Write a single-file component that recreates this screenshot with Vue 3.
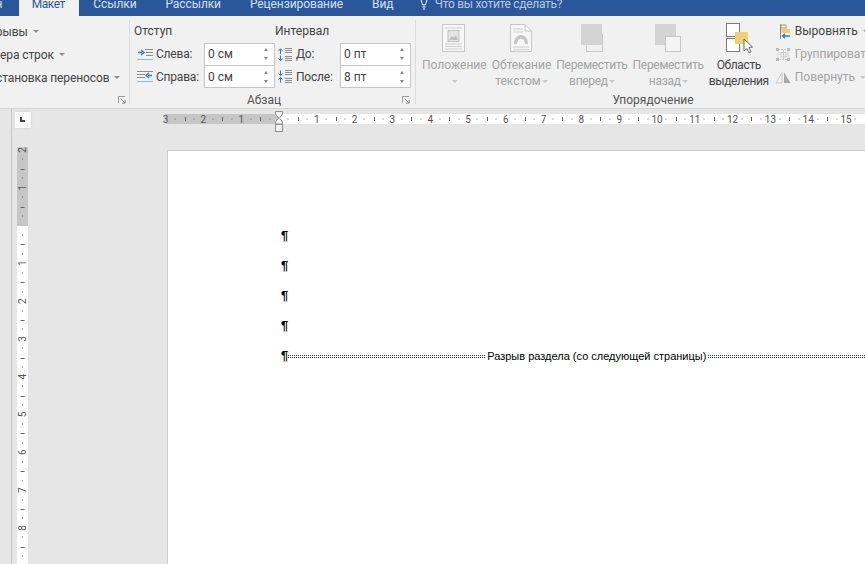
<template>
  <div class="app">
    <!-- вкладки -->
    <div class="tabs">
      <span v-for="t in tabs" :key="t" class="tab" :class="{ active: t === 'Макет' }">{{ t }}</span>
      <svg class="bulb" width="12" height="12" viewBox="0 0 12 12">
        <path d="M3 -1 C3 2 4.5 3 4.5 5 L7.5 5 C7.5 3 9 2 9 -1" fill="none" stroke="#fff" />
        <path d="M4.5 7 H7.5 M5 9 H7" stroke="#fff" />
      </svg>
      <span class="tell">Что вы хотите сделать?</span>
    </div>

    <!-- лента -->
    <div class="ribbon">
      <section class="group g-page">
        <div class="body small-col">
          <div v-for="r in pageRows" :key="r" class="small-row"><span>{{ r }}</span><i class="caret"></i></div>
        </div>
        <div class="foot">
          <span></span><span></span>
          <svg class="launcher" width="8" height="8" viewBox="0 0 9 9">
            <path d="M0.5 8 V0.5 H8" fill="none" stroke="#8a8a8a" />
            <path d="M3 3 L7.5 7.5 M8 4.5 V8 H4.5" fill="none" stroke="#777" />
          </svg>
        </div>
      </section>

      <section class="group g-para">
        <div class="body para">
          <div v-for="col in paraCols" :key="col.title" class="para-col" :class="col.cls">
            <div class="para-title">{{ col.title }}</div>
            <div v-for="row in col.rows" :key="row.label" class="para-row">
              <svg class="para-icon" width="16" height="13" viewBox="0 0 16 13">
                <template v-if="row.icon === 'left'">
                  <path d="M8 1.5 H16 M9 4.5 H16 M9 7.5 H16" stroke="#8d8d8d" />
                  <path d="M0 11.5 H16" stroke="#9ab6cc" />
                  <path d="M1 4.5 H5 M4 2 L7 4.5 L4 7" fill="none" stroke="#2e7cb5" stroke-width="1.4" />
                </template>
                <template v-else-if="row.icon === 'right'">
                  <path d="M0 1.5 H16 M0 4.5 H8 M0 7.5 H8" stroke="#8d8d8d" />
                  <path d="M0 11.5 H16" stroke="#9ab6cc" />
                  <path d="M15 5.5 H11 M12 3 L9 5.5 L12 8" fill="none" stroke="#2e7cb5" stroke-width="1.4" />
                </template>
                <template v-else-if="row.icon === 'before'">
                  <path d="M3.5 6 V1 M1.5 3 L3.5 .8 L5.5 3" fill="none" stroke="#2e7cb5" />
                  <path d="M3.5 7.5 V12.5 M1.5 10.5 L3.5 12.7 L5.5 10.5" fill="none" stroke="#2e7cb5" />
                  <path d="M8 .5 H15 M8 2.5 H15 M8 4.5 H15 M8 8.5 H15 M8 10.5 H15 M8 12.5 H15" stroke="#8d8d8d" />
                </template>
                <template v-else>
                  <path d="M3.5 .5 V5.5 M1.5 3.5 L3.5 5.7 L5.5 3.5" fill="none" stroke="#2e7cb5" />
                  <path d="M3.5 12.5 V7.5 M1.5 9.5 L3.5 7.3 L5.5 9.5" fill="none" stroke="#2e7cb5" />
                  <path d="M8 .5 H15 M8 2.5 H15 M8 4.5 H15 M8 8.5 H15 M8 10.5 H15 M8 12.5 H15" stroke="#8d8d8d" />
                </template>
              </svg>
              <span class="para-label">{{ row.label }}</span>
              <div class="spin">
                <span>{{ row.value }}</span>
                <div class="arrows"><i class="up"></i><i class="down"></i></div>
              </div>
            </div>
          </div>
        </div>
        <div class="foot">
          <span></span><span>Абзац</span>
          <svg class="launcher" width="8" height="8" viewBox="0 0 9 9">
            <path d="M0.5 8 V0.5 H8" fill="none" stroke="#8a8a8a" />
            <path d="M3 3 L7.5 7.5 M8 4.5 V8 H4.5" fill="none" stroke="#777" />
          </svg>
        </div>
      </section>

      <section class="group g-arrange">
        <div class="body arrange">
          <div class="big off">
            <svg width="40" height="32" viewBox="0 0 40 32">
              <rect x="8.5" y="2.5" width="22" height="27" fill="#f7f7f7" stroke="#c6c6c6" />
              <path d="M11 6 H28 M11 22 H28 M11 24.5 H28 M11 27 H28" stroke="#cfcfcf" />
              <rect x="14" y="8.5" width="11" height="11" fill="#e4e4e4" stroke="#c2c2c2" />
              <path d="M15 18 L18 14 L20 16 L22 13 L24 18 Z" fill="#bdbdbd" />
            </svg>
            <div class="big-text">Положение<br /><i class="caret"></i></div>
          </div>
          <div class="big off">
            <svg width="40" height="32" viewBox="0 0 40 32">
              <path d="M9.5 2.5 H24 L30.5 9 V29.5 H9.5 Z" fill="#f7f7f7" stroke="#c6c6c6" />
              <path d="M24 2.5 V9 H30.5" fill="none" stroke="#c6c6c6" />
              <path d="M12 7 H22 M12 10 H22 M12 25 H28 M12 27.5 H28" stroke="#cfcfcf" />
              <path d="M13 22 C13 10 27 10 27 22 L24 22 C24 15 16 15 16 22 Z" fill="#c6c6c6" />
            </svg>
            <div class="big-text">Обтекание<br />текстом<i class="caret"></i></div>
          </div>
          <div class="big off tight">
            <svg width="40" height="32" viewBox="0 0 40 32">
              <rect x="14.5" y="12.5" width="16" height="17" fill="none" stroke="#c6c6c6" />
              <rect x="9" y="2" width="21" height="21" fill="#d4d4d4" />
            </svg>
            <div class="big-text">Переместить<br />вперед<i class="caret"></i></div>
          </div>
          <div class="big off tight">
            <svg width="40" height="32" viewBox="0 0 40 32">
              <rect x="7" y="2" width="21" height="21" fill="#d4d4d4" />
              <rect x="17.5" y="14.5" width="15" height="15" fill="#f4f4f4" stroke="#c6c6c6" />
            </svg>
            <div class="big-text">Переместить<br />назад<i class="caret"></i></div>
          </div>
          <div class="big tighter">
            <svg width="40" height="32" viewBox="0 0 40 32">
              <rect x="7.5" y="1.5" width="13" height="13" fill="#fff" stroke="#7a7a7a" />
              <rect x="7.5" y="16.5" width="13" height="13" fill="#fff" stroke="#7a7a7a" />
              <rect x="16" y="10" width="13" height="12" fill="#f0cf78" />
              <path d="M25 17 V29 L28 26.5 L30 31 L32 30 L30 25.5 L33.5 25 Z" fill="#fff" stroke="#666" />
            </svg>
            <div class="big-text">Область<br />выделения</div>
          </div>
          <div class="small-col side-col">
            <div class="small-row">
              <svg width="16" height="15" viewBox="0 0 16 15">
                <path d="M5.5 0 V15" stroke="#888" />
                <rect x="6" y="1" width="5" height="3" fill="none" stroke="#b99a5e" />
                <rect x="6" y="5" width="9" height="4" fill="#eec98a" />
                <path d="M15 12 H8 M10 9.8 L7.5 12 L10 14.2" fill="none" stroke="#2e7cb5" stroke-width="1.3" />
              </svg>
              <span>Выровнять</span><i class="caret"></i>
            </div>
            <div class="small-row off">
              <svg width="16" height="15" viewBox="0 0 16 15">
                <path d="M3 2.5 H13 V12.5 H3 Z" fill="none" stroke="#c9c9c9" stroke-dasharray="2 1" />
                <path d="M6 5.5 H11 V10 H6 Z M8.5 3 V12" fill="none" stroke="#c9c9c9" />
                <rect x="1" y="1" width="3" height="3" fill="#bbb" /><rect x="12" y="1" width="3" height="3" fill="#bbb" />
                <rect x="1" y="11" width="3" height="3" fill="#bbb" /><rect x="12" y="11" width="3" height="3" fill="#bbb" />
              </svg>
              <span>Группировать</span>
            </div>
            <div class="small-row off">
              <svg width="16" height="15" viewBox="0 0 16 15">
                <path d="M1 13 L7 2.5 V13 Z" fill="#f4f4f4" stroke="#c9c9c9" />
                <path d="M9 2.5 L15.5 13 H9 Z" fill="#a8a8a8" />
              </svg>
              <span>Повернуть</span><i class="caret"></i>
            </div>
          </div>
        </div>
        <div class="foot"><span></span><span>Упорядочение</span><span></span></div>
      </section>
    </div>

    <!-- рабочая область -->
    <div class="work">
      <div class="side">
        <div class="tab-stop"><i></i></div>
        <svg class="vruler" width="11" height="417" viewBox="0 0 11 417">
          <rect width="11" height="79" fill="#c6c6c6" />
          <rect y="79" width="11" height="338" fill="#fff" />
          <template v-for="m in vMarks" :key="m.key">
            <text v-if="m.num" :transform="`translate(9 ${m.pos}) rotate(-90)`" text-anchor="middle" class="rnum">{{ m.num }}</text>
            <line v-else-if="m.long" x1="3.5" x2="7.5" :y1="m.pos" :y2="m.pos" stroke="#666" />
            <rect v-else x="5" :y="m.pos - 0.5" width="1" height="1" fill="#666" />
          </template>
        </svg>
      </div>
      <div class="canvas">
        <svg class="hruler" width="700" height="26" viewBox="0 0 700 26">
          <rect y="5" width="114" height="10" fill="#c6c6c6" />
          <rect x="114" y="5" width="586" height="10" fill="#fff" />
          <template v-for="m in hMarks" :key="m.key">
            <text v-if="m.num" :x="m.pos" y="13.5" text-anchor="middle" class="rnum">{{ m.num }}</text>
            <line v-else-if="m.long" :x1="m.pos" :x2="m.pos" y1="8" y2="12" stroke="#666" />
            <rect v-else :x="m.pos - 0.5" y="9.5" width="1" height="1" fill="#666" />
          </template>
          <path d="M110.5 2.5 H117.5 V5 L114.5 9 L117.5 13 V15 H110.5 V13 L113.5 9 L110.5 5 Z" fill="#f4f4f4" stroke="#8f8f8f" />
          <rect x="110.5" y="15.5" width="7" height="7" fill="#f4f4f4" stroke="#8f8f8f" />
        </svg>
        <div class="page">
          <div v-for="n in 4" :key="n" class="para-mark">¶</div>
          <div class="para-mark section">
            ¶<span class="dots first"></span><span class="break-text">Разрыв раздела (со следующей страницы)</span><span class="dots"></span>
          </div>
        </div>
      </div>
    </div>
  </div>
</template>

<script setup>
const tabs = ['Дизайн', 'Макет', 'Ссылки', 'Рассылки', 'Рецензирование', 'Вид']
const pageRows = ['Разрывы', 'Номера строк', 'Расстановка переносов']

const paraCols = [
  {
    title: 'Отступ',
    cls: 'indent',
    rows: [
      { label: 'Слева:', value: '0 см', icon: 'left' },
      { label: 'Справа:', value: '0 см', icon: 'right' }
    ]
  },
  {
    title: 'Интервал',
    cls: 'interval',
    rows: [
      { label: 'До:', value: '0 пт', icon: 'before' },
      { label: 'После:', value: '8 пт', icon: 'after' }
    ]
  }
]

// деления линеек: цифра на каждом см, черта на 0.5, точки на 0.25 и 0.75
const CM = 37.8
const buildMarks = (from, to, origin) => {
  const marks = []
  for (let i = from; i < to; i++) {
    const at = origin + i * CM
    if (i !== 0) marks.push({ key: `n${i}`, pos: at, num: String(Math.abs(i)) })
    marks.push({ key: `a${i}`, pos: Math.round(at + CM / 4) })
    marks.push({ key: `b${i}`, pos: Math.round(at + CM / 2) + 0.5, long: true })
    marks.push({ key: `c${i}`, pos: Math.round(at + (CM * 3) / 4) })
  }
  return marks
}

const hMarks = buildMarks(-3, 16, 114)
const vMarks = buildMarks(-2, 9, 78.5)
</script>

<style scoped>
.app {
  width: 865px;
  height: 564px;
  overflow: hidden;
  display: flex;
  flex-direction: column;
  background: #e6e6e6;
  font-family: Roboto, "Liberation Sans", sans-serif;
  font-size: 12px;
  color: #444;
}

.tabs {
  flex: 0 0 16px;
  display: flex;
  align-items: flex-start;
  margin-left: -54px;
  background: #2b579a;
  color: #d6e0ee;
  letter-spacing: -0.1px;
  white-space: nowrap;
  overflow: hidden;
}

.tab {
  height: 16px;
  line-height: 9px;
  padding: 0 14.5px;
}

.tab:first-child {
  padding-right: 16.5px;
}

.tab.active {
  background: #f1f1f1;
  color: #2b579a;
  letter-spacing: -0.5px;
  padding: 0 14px 0 13px;
}

.bulb {
  margin-left: 10px;
  flex: none;
}

.tell {
  margin-left: 5px;
  line-height: 9px;
  letter-spacing: -0.3px;
  color: #b9c9e0;
}

.ribbon {
  flex: 0 0 92px;
  display: flex;
  background: #f1f1f1;
  border-bottom: 1px solid #d4d4d4;
  white-space: nowrap;
}

.group {
  flex: none;
  height: 92px;
  display: flex;
  flex-direction: column;
  position: relative;
}

.group:not(:last-child)::after {
  content: "";
  position: absolute;
  right: 0;
  top: 4px;
  bottom: 4px;
  width: 1px;
  background: #dcdcdc;
}

.body {
  flex: 1;
  min-height: 0;
}

.foot {
  flex: 0 0 16px;
  display: grid;
  grid-template-columns: 1fr auto 1fr;
  align-items: center;
  line-height: 14px;
  color: #555;
}

.launcher {
  justify-self: end;
}

.g-page {
  width: 154px;
  margin-left: -24px;
  letter-spacing: -0.1px;
}

.g-page .launcher {
  margin-right: 4px;
}

.g-para {
  width: 286px;
}

.g-para .foot {
  padding-right: 18px;
}

.g-para .launcher {
  margin-right: -12px;
}

.g-arrange {
  width: 474px;
}

.small-col {
  padding-top: 4px;
}

.small-row {
  height: 23px;
  display: flex;
  align-items: center;
  gap: 4px;
}

.off {
  color: #a3a3a3;
}

.tight {
  letter-spacing: -0.3px;
}

.tighter {
  letter-spacing: -0.4px;
}

.caret {
  display: inline-block;
  width: 0;
  height: 0;
  margin-left: 1px;
  border: 3px solid transparent;
  border-top: 3px solid #8f8f8f;
  border-bottom: 0;
  vertical-align: middle;
}

.off .caret {
  border-top-color: #c8c8c8;
}

.para {
  display: flex;
  padding: 8px 0 0 4px;
}

.para-col.indent {
  width: 141px;
}

.para-col.interval {
  width: 136px;
}

.para-title {
  height: 19px;
  line-height: 14px;
}

.para-col.indent .para-row {
  padding-left: 3px;
}

.para-col.interval .para-row {
  padding-left: 2px;
}

.para-row {
  display: flex;
  align-items: center;
  height: 22.5px;
}

.para-icon {
  flex: none;
}

.para-label {
  flex: 1;
  margin-left: 3px;
  letter-spacing: -0.2px;
}

.spin {
  flex: none;
  box-sizing: border-box;
  width: 71px;
  height: 23px;
  padding: 0 6px 0 3px;
  display: flex;
  align-items: center;
  justify-content: space-between;
  background: #fff;
  border: 1px solid #c6c6c6;
}

.arrows {
  display: flex;
  flex-direction: column;
  gap: 6px;
}

.arrows i {
  width: 0;
  height: 0;
  border: 2.5px solid transparent;
}

.arrows .up {
  border-top: 0;
  border-bottom: 3px solid #8a8a8a;
}

.arrows .down {
  border-bottom: 0;
  border-top: 3px solid #8a8a8a;
}

.arrange {
  display: flex;
  gap: 5px;
  padding-left: 6px;
}

.big {
  flex: none;
  display: flex;
  flex-direction: column;
  align-items: center;
  padding-top: 6px;
}

.big svg {
  display: block;
  margin-bottom: 3px;
  flex: none;
}

.big-text {
  text-align: center;
  line-height: 16px;
}

.side-col {
  margin-left: 1px;
  padding-top: 3.5px;
}

.side-col svg {
  flex: none;
}

.work {
  flex: 1;
  min-height: 0;
  display: flex;
}

.side {
  flex: none;
  box-sizing: border-box;
  width: 154px;
  margin-left: 11px;
  border-left: 1px solid #c6c6c6;
}

.tab-stop {
  width: 16px;
  height: 16px;
  margin: 3px 0 0 3px;
  background: #fbfbfb;
  box-shadow: 0 0 2px #c8c8c8;
  position: relative;
}

.tab-stop i {
  position: absolute;
  left: 5px;
  top: 5px;
  width: 5px;
  height: 5px;
  border-left: 2px solid #444;
  border-bottom: 2px solid #444;
  box-sizing: border-box;
}

.vruler {
  display: block;
  margin: 19px 0 0 5px;
}

.rnum {
  font-family: Roboto, "Liberation Sans", sans-serif;
  font-size: 10px;
  fill: #555;
}

.canvas {
  flex: 1;
  min-width: 0;
}

.hruler {
  display: block;
  overflow: visible;
}

.page {
  margin: 15px 0 0 2px;
  height: 500px;
  padding: 70px 0 0 113px;
  background: #fff;
  border-top: 1px solid #cdcdcd;
  border-left: 1px solid #cdcdcd;
  color: #000;
  font-family: "Liberation Sans", Arial, sans-serif;
}

.para-mark {
  height: 30px;
  line-height: 30px;
  font-size: 13px;
  font-weight: 700;
}

.section {
  display: flex;
  align-items: center;
}

.dots {
  flex: 1;
  height: 1px;
  border-top: 1px dotted #333;
  border-bottom: 1px dotted #333;
}

.dots.first {
  flex: 0 0 197px;
}

.break-text {
  flex: none;
  margin: 0 2px;
  font-size: 11px;
  font-weight: 400;
}
</style>

<style>
html,
body {
  overflow: hidden;
}
</style>
